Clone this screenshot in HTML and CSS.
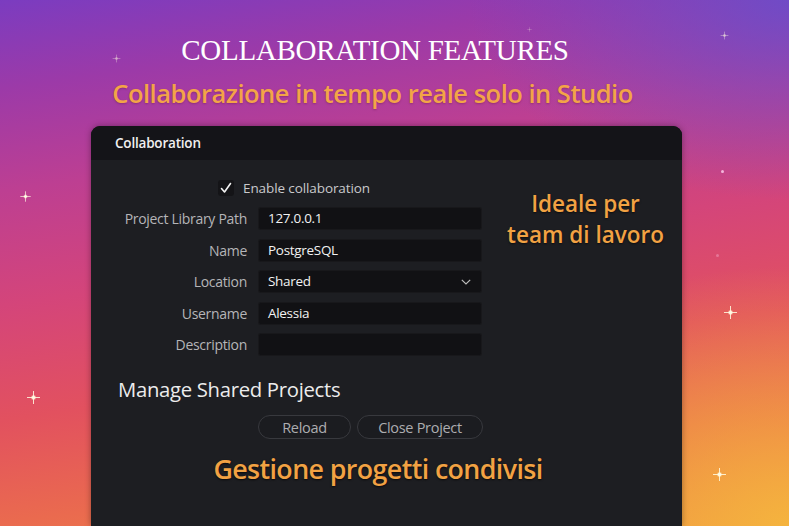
FILE: index.html
```html
<!DOCTYPE html>
<html lang="it">
<head>
<meta charset="utf-8">
<title>Collaboration Features</title>
<link rel="stylesheet" href="styles.css">
</head>
<body>
<div class="stage">
  <span class="spark s1"></span>
  <span class="spark s2"></span>
  <span class="spark s3"></span>
  <span class="spark s4"></span>
  <span class="spark s5"></span>
  <span class="spark s6"></span>
  <span class="spark s7"></span>
  <span class="dot d1"></span>
  <span class="dot d2"></span>

  <h1 class="title">COLLABORATION FEATURES</h1>
  <p class="subtitle">Collaborazione in tempo reale solo in Studio</p>

  <section class="panel">
    <header class="panel-head">Collaboration</header>
    <div class="panel-body">
      <div class="top">
        <div class="form">
          <label class="check-row">
            <span class="checkbox">
              <svg width="14" height="14" viewBox="0 0 14 14"><polyline points="2.5,7.5 5.5,11 11.5,2.5" fill="none" stroke="#f2f2f2" stroke-width="1.6" stroke-linecap="round" stroke-linejoin="round"/></svg>
            </span>
            <span class="check-text">Enable collaboration</span>
          </label>
          <div class="grid">
            <span class="label">Project Library Path</span>
            <div class="field">127.0.0.1</div>
            <span class="label">Name</span>
            <div class="field">PostgreSQL</div>
            <span class="label">Location</span>
            <div class="field select">Shared
              <svg class="chev" width="10" height="6" viewBox="0 0 10 6"><polyline points="0.8,0.8 5,5 9.2,0.8" fill="none" stroke="#bdbdbd" stroke-width="1.2"/></svg>
            </div>
            <span class="label">Username</span>
            <div class="field">Alessia</div>
            <span class="label">Description</span>
            <div class="field"></div>
          </div>
        </div>
        <div class="note">
          <div class="note-line">Ideale per</div>
          <div class="note-line">team di lavoro</div>
        </div>
      </div>
      <h2 class="manage">Manage Shared Projects</h2>
      <div class="buttons">
        <button class="btn reload">Reload</button>
        <button class="btn close">Close Project</button>
      </div>
      <p class="bottom-note">Gestione progetti condivisi</p>
    </div>
  </section>
</div>
</body>
</html>
```
FILE: styles.css
```css
* { box-sizing: border-box; }
html, body { margin: 0; padding: 0; }
body {
  width: 789px;
  height: 526px;
  overflow: hidden;
  font-family: "Open Sans", "Noto Sans", sans-serif;
}
.stage {
  position: relative;
  width: 789px;
  height: 526px;
  overflow: hidden;
  display: flex;
  flex-direction: column;
  background:
    radial-gradient(ellipse 320px 200px at 789px 0px, rgba(95, 80, 210, 0.75), rgba(95, 80, 210, 0) 100%),
    radial-gradient(ellipse 360px 260px at 789px 526px, rgba(246, 190, 60, 0.8), rgba(246, 190, 60, 0) 100%),
    linear-gradient(172deg, #7b3cc0 0%, #9c3aa8 14%, #bd3f92 30%, #d4457a 48%, #e2515f 66%, #ea6a4f 82%, #ef8a45 100%);
}
.title {
  margin: 33px 0 0 0;
  padding-right: 39px;
  text-align: center;
  font-family: "Liberation Serif", "DejaVu Serif", serif;
  font-weight: 400;
  font-size: 29px;
  line-height: 34px;
  letter-spacing: -0.3px;
  color: #ffffff;
}
.subtitle {
  margin: 10px 0 0 0;
  padding-right: 44px;
  text-align: center;
  font-weight: 600;
  font-size: 25.5px;
  line-height: 32px;
  letter-spacing: -0.5px;
  color: #f3a447;
  text-shadow: 0 1px 2px rgba(90, 20, 60, 0.35);
}
.panel {
  margin: 17px 0 0 91px;
  width: 591px;
  flex: 1;
  background: #1d1e22;
  border-radius: 9px 9px 0 0;
  box-shadow: 0 0 6px rgba(0, 0, 0, 0.35);
  display: flex;
  flex-direction: column;
}
.panel-head {
  height: 34px;
  display: flex;
  align-items: center;
  padding-left: 24px;
  background: #141418;
  border-radius: 9px 9px 0 0;
  color: #f0f0f0;
  font-weight: 600;
  font-size: 13.5px;
  letter-spacing: -0.2px;
}
.panel-body { padding-top: 19px; }
.top { display: flex; }
.form { width: 391px; }
.check-row {
  display: flex;
  align-items: center;
  gap: 9px;
  padding-left: 127px;
  height: 18px;
}
.checkbox {
  width: 16px;
  height: 16px;
  border-radius: 3px;
  background: #141417;
  display: flex;
  align-items: center;
  justify-content: center;
}
.check-text {
  color: #c9c9cc;
  font-size: 13.5px;
  letter-spacing: -0.1px;
}
.grid {
  margin-top: 10px;
  display: grid;
  grid-template-columns: 156px 224px;
  column-gap: 11px;
  row-gap: 8.5px;
}
.label {
  text-align: right;
  color: #b5b5b8;
  font-size: 14px;
  letter-spacing: -0.3px;
  line-height: 23px;
}
.field {
  height: 23px;
  background: #111114;
  border-radius: 3px;
  padding-left: 10px;
  color: #f2f2f2;
  font-size: 13.5px;
  letter-spacing: -0.3px;
  line-height: 23px;
  box-shadow: inset 0 0 0 1px rgba(255, 255, 255, 0.03);
}
.select {
  display: flex;
  align-items: center;
  justify-content: space-between;
  padding-right: 11px;
}
.note {
  flex: 1;
  margin-top: 8.5px;
  padding-left: 7px;
  text-align: center;
  color: #f2a243;
  font-weight: 600;
  font-size: 22.5px;
  letter-spacing: 0;
  text-shadow: 0 1px 2px rgba(0, 0, 0, 0.6);
}
.note-line { line-height: 31px; height: 31px; }
.manage {
  margin: 20px 0 0 27px;
  font-weight: 400;
  font-size: 20.3px;
  line-height: 26px;
  letter-spacing: -0.3px;
  color: #ececec;
}
.buttons {
  margin: 13px 0 0 167px;
  display: flex;
  gap: 6px;
}
.btn {
  height: 24px;
  border-radius: 12px;
  border: 1px solid #38393e;
  background: #1b1c20;
  color: #adadb0;
  font-family: "Open Sans", "Noto Sans", sans-serif;
  font-size: 14.5px;
  letter-spacing: -0.3px;
  padding: 0;
}
.reload { width: 93px; }
.close { width: 126px; }
.bottom-note {
  margin: 14px 0 0 0;
  text-align: center;
  padding-right: 17px;
  color: #f2a243;
  font-weight: 600;
  font-size: 26.8px;
  line-height: 32px;
  letter-spacing: -0.6px;
  text-shadow: 0 1px 2px rgba(0, 0, 0, 0.7);
}
.spark {
  position: absolute;
  width: 13px;
  height: 13px;
  margin: -6.5px 0 0 -6.5px;
  background: radial-gradient(circle, rgba(255, 255, 240, 1) 0 1.2px, rgba(255, 240, 200, 0.5) 2px, rgba(255, 240, 200, 0) 3px);
}
.spark::before, .spark::after {
  content: "";
  position: absolute;
  background: rgba(255, 250, 225, 0.85);
}
.spark::before { left: 6px; top: 0; width: 1px; height: 13px; }
.spark::after { top: 6px; left: 0; height: 1px; width: 13px; }
.s1 { left: 116px; top: 58px; transform: scale(0.6); opacity: 0.6; }
.s2 { left: 25px; top: 196px; transform: scale(0.8); }
.s3 { left: 33px; top: 397px; }
.s4 { left: 724px; top: 35px; transform: scale(0.6); opacity: 0.7; }
.s5 { left: 730px; top: 312px; }
.s6 { left: 719px; top: 474px; }
.s7 { left: 529px; top: 29px; transform: scale(0.4); opacity: 0.4; }
.dot {
  position: absolute;
  width: 3px;
  height: 3px;
  border-radius: 50%;
  background: rgba(255, 210, 240, 0.8);
}
.d1 { left: 721px; top: 170px; }
.d2 { left: 716px; top: 254px; opacity: 0.4; }
```
